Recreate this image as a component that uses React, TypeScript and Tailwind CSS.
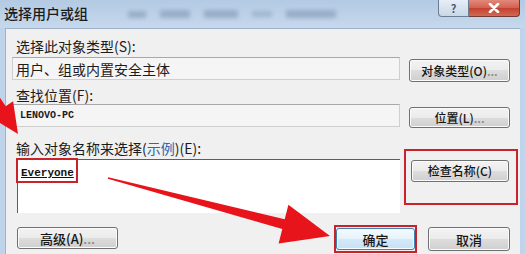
import React from "react";

const btn =
  "flex items-center justify-center rounded-[3px] border border-[#707070] bg-[linear-gradient(#f3f3f3_0%,#ebebeb_50%,#dddddd_50%,#cfcfcf_100%)] shadow-[inset_0_0_0_1px_#fbfbfb] text-[#151515] font-medium leading-none";

export default function App() {
  return (
    <div className="relative w-[525px] h-[254px] overflow-hidden bg-[#bfd3ea] font-['Noto_Sans_CJK_SC',sans-serif] flex flex-col">
      {/* title bar */}
      <div className="h-[28px] flex items-start bg-[linear-gradient(180deg,#b3cae3_0%,#c6d8ec_100%)]">
        <div className="pl-[4px] pt-[4px] text-[14px] leading-[18px] text-[#1b1b1b] font-medium">选择用户或组</div>
        <div className="flex items-center gap-[14px] ml-[40px] mt-[10px] opacity-60">
          <div className="w-[18px] h-[7px] bg-[#7f97b3] blur-[2px]" />
          <div className="w-[30px] h-[8px] bg-[#7f97b3] blur-[2px]" />
          <div className="w-[34px] h-[8px] bg-[#7f97b3] blur-[2px]" />
          <div className="w-[20px] h-[6px] bg-[#8ea4bf] blur-[2px]" />
          <div className="w-[50px] h-[8px] bg-[#7f97b3] blur-[2px]" />
        </div>
        <div className="ml-auto mr-[5px] flex">
          <div className="w-[31px] h-[17px] rounded-bl-[4px] border border-t-0 border-[#6c7d92] bg-[linear-gradient(#e6eef7,#c9d7e6)] flex items-center justify-center text-[11px] font-bold text-[#4a5a70] leading-none">
            ?
          </div>
          <div className="w-[51px] h-[17px] rounded-br-[4px] border border-t-0 border-l-0 border-[#6e3b35] bg-[linear-gradient(#e38a7b_0%,#d2604f_50%,#c2402e_50%,#d26a52_100%)] flex items-center justify-center">
            <svg width="12" height="10" viewBox="0 0 12 10">
              <path d="M2 1 L10 9 M10 1 L2 9" stroke="#ffffff" strokeWidth="2.6" strokeLinecap="round" />
            </svg>
          </div>
        </div>
      </div>

      {/* dialog body */}
      <div className="flex-1 mx-[5px] bg-[#f0f0f0] border-t border-l border-[#9fb2c7] pl-[6px] pr-[10px] pt-[9px] flex flex-col">
        <div className="h-[16px] pl-[4px] text-[14px] leading-[16px] text-[#1b1b1b]">选择此对象类型(S):</div>

        <div className="mt-[3px] flex items-start">
          <div className="w-[388px] h-[23px] border border-[#cfcfcf] border-t-[#a8a8a8] bg-[#f5f5f5] pl-[3px] flex items-center text-[14px] leading-none text-[#1b1b1b]">
            用户、组或内置安全主体
          </div>
          <div className={`${btn} ml-[9px] mt-[2px] w-[101px] h-[23px] text-[12px]`}>
            对象类型(O)<span className="text-[#888]">...</span>
          </div>
        </div>

        <div className="mt-[5px] h-[16px] pl-[4px] text-[14px] leading-[16px] text-[#1b1b1b]">查找位置(F):</div>

        <div className="mt-[1px] flex items-start">
          <div className="w-[388px] h-[23px] border border-[#cfcfcf] border-t-[#a8a8a8] bg-[#f5f5f5] pl-[7px] flex items-center font-['Liberation_Mono',monospace] font-bold text-[10px] leading-none text-[#1b1b1b]">
            LENOVO-PC
          </div>
          <div className={`${btn} ml-[9px] mt-[3px] w-[101px] h-[21px] text-[12px]`}>
            位置(L)<span className="text-[#888]">...</span>
          </div>
        </div>

        <div className="mt-[12px] h-[16px] pl-[4px] text-[14px] leading-[16px] text-[#1b1b1b]">
          输入对象名称来选择(<span className="text-[#2568b4]">示例</span>)(E):
        </div>

        <div className="mt-[3px] flex items-start">
          <div className="ml-[5px] w-[383px] h-[54px] bg-white border-t border-l border-[#5e5e5e] pl-[3px] pt-[7px] font-['Liberation_Mono',monospace] font-bold text-[11px] leading-[13px] text-[#111]">
            <div className="underline">Everyone</div>
          </div>
          <div className={`${btn} ml-[11px] mt-[1px] w-[98px] h-[22px] text-[12px]`}>检查名称(C)</div>
        </div>

        <div className="mt-[14px] flex items-start justify-between">
          <div className={`${btn} ml-[5px] w-[101px] h-[22px] text-[13px]`}>
            高级(A)<span className="text-[#888]">...</span>
          </div>
          <div className="flex items-start gap-[13px]">
            <div className="mt-[1px] w-[79px] h-[22px] flex items-center justify-center rounded-[3px] border border-[#3c7fb1] bg-[linear-gradient(#f4fafe_0%,#e6f2fb_50%,#d4e9f8_50%,#c8e1f5_100%)] shadow-[inset_0_0_0_1px_#f8fcff] text-[13px] font-medium text-[#151515] leading-none">
              确定
            </div>
            <div className={`${btn} w-[82px] h-[24px] text-[13px]`}>取消</div>
          </div>
        </div>
      </div>

      {/* annotation boxes */}
      <div className="absolute left-[16px] top-[158px] w-[62px] h-[25px] border-2 border-[#c8232b]" />
      <div className="absolute left-[404px] top-[149px] w-[114px] h-[56px] border-2 border-[#c8232b]" />
      <div className="absolute left-[334px] top-[225px] w-[83px] h-[28px] border-2 border-[#c8232b]" />

      {/* annotation arrows */}
      <svg className="absolute inset-0 pointer-events-none" width="525" height="254" viewBox="0 0 525 254">
        <polygon
          points="108.2,177.2 284.7,219.3 288.4,204.7 330,236 278.6,243.5 282.3,229 107.8,178.8"
          fill="#e8141b"
        />
        <polygon
          points="5.65,106.25 13.1,101.3 18,134 -10,116.7 -2.65,111.75 -24.65,78.55 -16.35,73.05"
          fill="#e8141b"
        />
      </svg>
    </div>
  );
}
